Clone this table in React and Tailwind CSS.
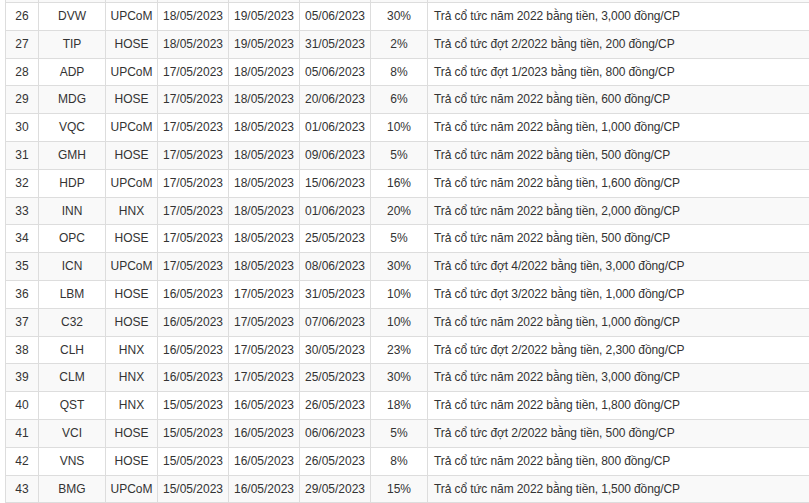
import React from "react";

const rows = [
  ["26", "DVW", "UPCoM", "18/05/2023", "19/05/2023", "05/06/2023", "30%", "Trả cổ tức năm 2022 bằng tiền, 3,000 đồng/CP"],
  ["27", "TIP", "HOSE", "18/05/2023", "19/05/2023", "31/05/2023", "2%", "Trả cổ tức đợt 2/2022 bằng tiền, 200 đồng/CP"],
  ["28", "ADP", "UPCoM", "17/05/2023", "18/05/2023", "05/06/2023", "8%", "Trả cổ tức đợt 1/2023 bằng tiền, 800 đồng/CP"],
  ["29", "MDG", "HOSE", "17/05/2023", "18/05/2023", "20/06/2023", "6%", "Trả cổ tức năm 2022 bằng tiền, 600 đồng/CP"],
  ["30", "VQC", "UPCoM", "17/05/2023", "18/05/2023", "01/06/2023", "10%", "Trả cổ tức năm 2022 bằng tiền, 1,000 đồng/CP"],
  ["31", "GMH", "HOSE", "17/05/2023", "18/05/2023", "09/06/2023", "5%", "Trả cổ tức năm 2022 bằng tiền, 500 đồng/CP"],
  ["32", "HDP", "UPCoM", "17/05/2023", "18/05/2023", "15/06/2023", "16%", "Trả cổ tức năm 2022 bằng tiền, 1,600 đồng/CP"],
  ["33", "INN", "HNX", "17/05/2023", "18/05/2023", "01/06/2023", "20%", "Trả cổ tức năm 2022 bằng tiền, 2,000 đồng/CP"],
  ["34", "OPC", "HOSE", "17/05/2023", "18/05/2023", "25/05/2023", "5%", "Trả cổ tức năm 2022 bằng tiền, 500 đồng/CP"],
  ["35", "ICN", "UPCoM", "17/05/2023", "18/05/2023", "08/06/2023", "30%", "Trả cổ tức đợt 4/2022 bằng tiền, 3,000 đồng/CP"],
  ["36", "LBM", "HOSE", "16/05/2023", "17/05/2023", "31/05/2023", "10%", "Trả cổ tức đợt 3/2022 bằng tiền, 1,000 đồng/CP"],
  ["37", "C32", "HOSE", "16/05/2023", "17/05/2023", "07/06/2023", "10%", "Trả cổ tức năm 2022 bằng tiền, 1,000 đồng/CP"],
  ["38", "CLH", "HNX", "16/05/2023", "17/05/2023", "30/05/2023", "23%", "Trả cổ tức đợt 2/2022 bằng tiền, 2,300 đồng/CP"],
  ["39", "CLM", "HNX", "16/05/2023", "17/05/2023", "25/05/2023", "30%", "Trả cổ tức năm 2022 bằng tiền, 3,000 đồng/CP"],
  ["40", "QST", "HNX", "15/05/2023", "16/05/2023", "26/05/2023", "18%", "Trả cổ tức năm 2022 bằng tiền, 1,800 đồng/CP"],
  ["41", "VCI", "HOSE", "15/05/2023", "16/05/2023", "06/06/2023", "5%", "Trả cổ tức đợt 2/2022 bằng tiền, 500 đồng/CP"],
  ["42", "VNS", "HOSE", "15/05/2023", "16/05/2023", "26/05/2023", "8%", "Trả cổ tức năm 2022 bằng tiền, 800 đồng/CP"],
  ["43", "BMG", "UPCoM", "15/05/2023", "16/05/2023", "29/05/2023", "15%", "Trả cổ tức năm 2022 bằng tiền, 1,500 đồng/CP"],
];

const widths = ["w-[33px]", "w-[67px]", "w-[52px]", "w-[71px]", "w-[71px]", "w-[71px]", "w-[57px]", "w-[420px]"];

const App = () => {
  return (
    <div className="w-[809px] h-[503px] overflow-hidden bg-white pl-[5px]">
      <table
        className="table-fixed border-collapse w-[842px] text-[12px] text-[#333]"
        style={{ fontFamily: '"Liberation Sans", Arial, sans-serif' }}
      >
        <colgroup>
          {widths.map((w, i) => (
            <col key={i} className={w} />
          ))}
        </colgroup>
        <tbody>
          {/* tail of the previous row, cut off by the viewport */}
          <tr className="bg-[#f9f9f9] h-[2.5px]">
            {widths.map((w, i) => (
              <td key={i} className="p-0 border-x border-b border-[#dddddd]" />
            ))}
          </tr>
          {rows.map((r, i) => (
            <tr key={r[0]} className={i % 2 === 0 ? "bg-white" : "bg-[#f9f9f9]"}>
              {r.map((c, j) => (
                <td
                  key={j}
                  className={
                    "border border-[#dddddd] py-[5px] leading-[16.8px] whitespace-nowrap " +
                    (j === 7 ? "text-left px-[6px] tracking-[-0.1px]" : "text-center px-[2px]")
                  }
                >
                  {c}
                </td>
              ))}
            </tr>
          ))}
        </tbody>
      </table>
    </div>
  );
};

export default App;
